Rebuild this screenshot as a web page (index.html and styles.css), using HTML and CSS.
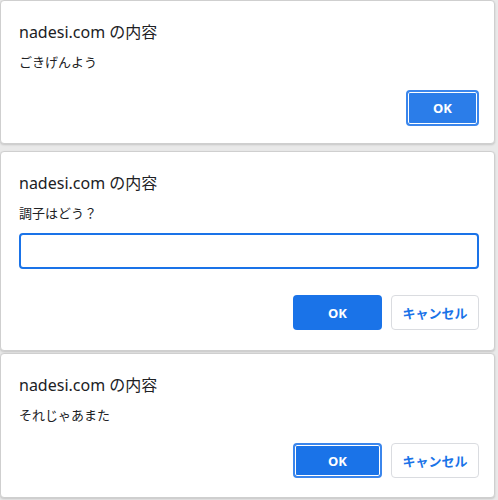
FILE: index.html
```html
<!DOCTYPE html>
<html>
<head>
  <meta charset="utf-8">
  <title>nadesi.com dialogs</title>
  <link rel="stylesheet" href="styles.css">
</head>
<body>
  <div class="dialog alert">
    <div class="title">nadesi.com の内容</div>
    <div class="message">ごきげんよう</div>
    <div class="buttons">
      <button class="ok small focus">OK</button>
    </div>
  </div>

  <div class="dialog prompt">
    <div class="title">nadesi.com の内容</div>
    <div class="message">調子はどう？</div>
    <input class="answer" type="text">
    <div class="buttons">
      <button class="ok">OK</button>
      <button class="cancel">キャンセル</button>
    </div>
  </div>

  <div class="dialog confirm">
    <div class="title">nadesi.com の内容</div>
    <div class="message">それじゃあまた</div>
    <div class="buttons">
      <button class="ok focus">OK</button>
      <button class="cancel">キャンセル</button>
    </div>
  </div>
</body>
</html>
```

FILE: styles.css
```css
body {
  margin: 0;
  background: #e9e9e9;
  font-family: "Noto Sans", "Noto Sans CJK JP", sans-serif;
  color: #202124;
  width: 498px;
  height: 500px;
  overflow: hidden;
}

.dialog {
  width: 495px;
  box-sizing: border-box;
  background: #fff;
  border: 1px solid #cfcfcf;
  border-radius: 4px;
  padding: 19px 15px 16px 18px;
  box-shadow: 0 1px 2px rgba(0, 0, 0, 0.15);
}
.alert { height: 144px; }
.prompt { height: 200px; margin-top: 7px; }
.confirm { height: 145px; margin-top: 2px; padding-bottom: 17px; }

.title { font-size: 16px; line-height: 24px; height: 24px; }
.message { font-size: 13px; line-height: 20px; margin-top: 8px; }

.answer {
  display: block;
  width: 100%;
  box-sizing: border-box;
  height: 36px;
  margin-top: 10px;
  border: 2px solid #1a73e8;
  border-radius: 4px;
  outline: none;
  font-size: 14px;
  padding: 0 8px;
}

.buttons {
  display: flex;
  justify-content: flex-end;
  gap: 9px;
  margin-top: 18px;
}
.prompt .buttons { margin-top: 26px; }

button {
  height: 35px;
  width: 89px;
  box-sizing: border-box;
  border-radius: 4px;
  font-family: "Noto Sans", "Noto Sans CJK JP", sans-serif;
  font-size: 13px;
  font-weight: bold;
  cursor: pointer;
}
.ok { background: #1a73e8; color: #fff; border: none; }
.ok.small { width: 73px; height: 36px; background: #2b7de9; }
.ok.focus { border: 2px solid #3b86ec; box-shadow: inset 0 0 0 1px #fff; }
.cancel { background: #fff; color: #1a73e8; border: 1px solid #dadce0; width: 88px; font-weight: 600; }
```
